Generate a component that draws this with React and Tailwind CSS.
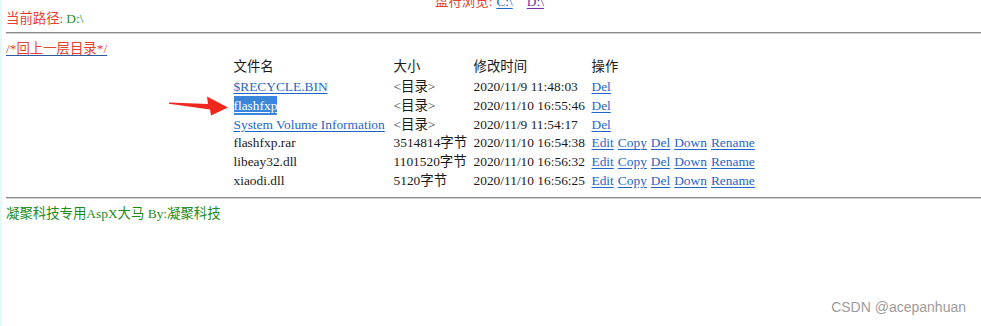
import React from "react";

const rows = [
  { name: "$RECYCLE.BIN", size: "<目录>", time: "2020/11/9 11:48:03", dir: true },
  { name: "flashfxp", size: "<目录>", time: "2020/11/10 16:55:46", dir: true, selected: true },
  { name: "System Volume Information", size: "<目录>", time: "2020/11/9 11:54:17", dir: true },
  { name: "flashfxp.rar", size: "3514814字节", time: "2020/11/10 16:54:38" },
  { name: "libeay32.dll", size: "1101520字节", time: "2020/11/10 16:56:32" },
  { name: "xiaodi.dll", size: "5120字节", time: "2020/11/10 16:56:25" },
];

const fileActions = ["Edit", "Copy", "Del", "Down", "Rename"];

const Link = ({ children, className = "" }) => (
  <a className={`text-[#1f66c8] underline decoration-[#1f66c8] underline-offset-2 cursor-pointer ${className}`}>
    {children}
  </a>
);

const Rule = () => (
  <div className="h-[2px] border-t border-[#8a8a8a] border-b border-b-[#d4d4d4]" />
);

const App = () => {
  return (
    <div
      className="relative w-[981px] h-[326px] overflow-hidden bg-white border-l-2 border-[#e3f8f8] text-[13.4px] text-[#1a1a1a]"
      style={{ fontFamily: '"Liberation Serif", "Noto Sans CJK SC", serif' }}
    >
      <div className="pl-[4px]">
        {/* 盘符浏览 */}
        <div className="-mt-[7px] h-[17px] leading-[17px] flex justify-center pr-[8px]">
          <span className="text-[#e8402f]">盘符浏览:</span>
          <Link className="ml-[4px]">C:\</Link>
          <a className="ml-[14px] text-[#7a2fa0] underline underline-offset-2">D:\</a>
        </div>

        <div className="h-[17px] leading-[17px]">
          <span className="text-[#e8402f]">当前路径:</span>
          <span className="text-[#1c8c1c] ml-[3px]">D:\</span>
        </div>

        <div className="mt-[5px]">
          <Rule />
        </div>

        <div className="mt-[6px] h-[17px] leading-[17px]">
          <a className="text-[#e8402f] underline decoration-[#2a5d9a] underline-offset-2">/*回上一层目录*/</a>
        </div>

        {/* file table */}
        <div className="flex justify-center pr-[4px]">
          <div className="grid grid-cols-[160px_80px_118px_164px]">
            <div className="pl-[3px] h-[21px] leading-[19px]">文件名</div>
            <div className="pl-[3px] h-[21px] leading-[19px]">大小</div>
            <div className="pl-[3px] h-[21px] leading-[19px]">修改时间</div>
            <div className="pl-[3px] h-[21px] leading-[19px]">操作</div>

            {rows.map((r) => (
              <React.Fragment key={r.name}>
                <div className="pl-[3px] h-[18.8px] leading-[18.8px] whitespace-nowrap">
                  {r.dir ? (
                    r.selected ? (
                      <span className="bg-[#3a86db] text-white underline underline-offset-2 py-[2px]">{r.name}</span>
                    ) : (
                      <Link>{r.name}</Link>
                    )
                  ) : (
                    r.name
                  )}
                </div>
                <div className="pl-[3px] h-[18.8px] leading-[18.8px] whitespace-nowrap">{r.size}</div>
                <div className="pl-[3px] h-[18.8px] leading-[18.8px] whitespace-nowrap">{r.time}</div>
                <div className="pl-[3px] h-[18.8px] leading-[18.8px] whitespace-nowrap flex gap-[4px]">
                  {r.dir ? (
                    <Link>Del</Link>
                  ) : (
                    fileActions.map((a) => <Link key={a}>{a}</Link>)
                  )}
                </div>
              </React.Fragment>
            ))}
          </div>
        </div>

        <div className="mt-[6px]">
          <Rule />
        </div>

        <div className="mt-[6px] h-[17px] leading-[17px] text-[#1c8c1c]">
          凝聚科技专用AspX大马 By:凝聚科技
        </div>
      </div>

      {/* annotation arrow */}
      <svg
        className="absolute left-[160px] top-[92px]"
        width="70"
        height="28"
        viewBox="160 92 70 28"
      >
        <polygon
          points="167,102.5 206,104 205,96.5 226,107.5 209,115.5 208,109.5 167,103.8"
          fill="#f0271d"
        />
      </svg>

      {/* watermark */}
      <div
        className="absolute right-[15px] bottom-[8px] text-[14px] text-[#9c9c9c]"
        style={{ fontFamily: '"Liberation Sans", Arial, sans-serif' }}
      >
        CSDN @acepanhuan
      </div>
    </div>
  );
};

export default App;
